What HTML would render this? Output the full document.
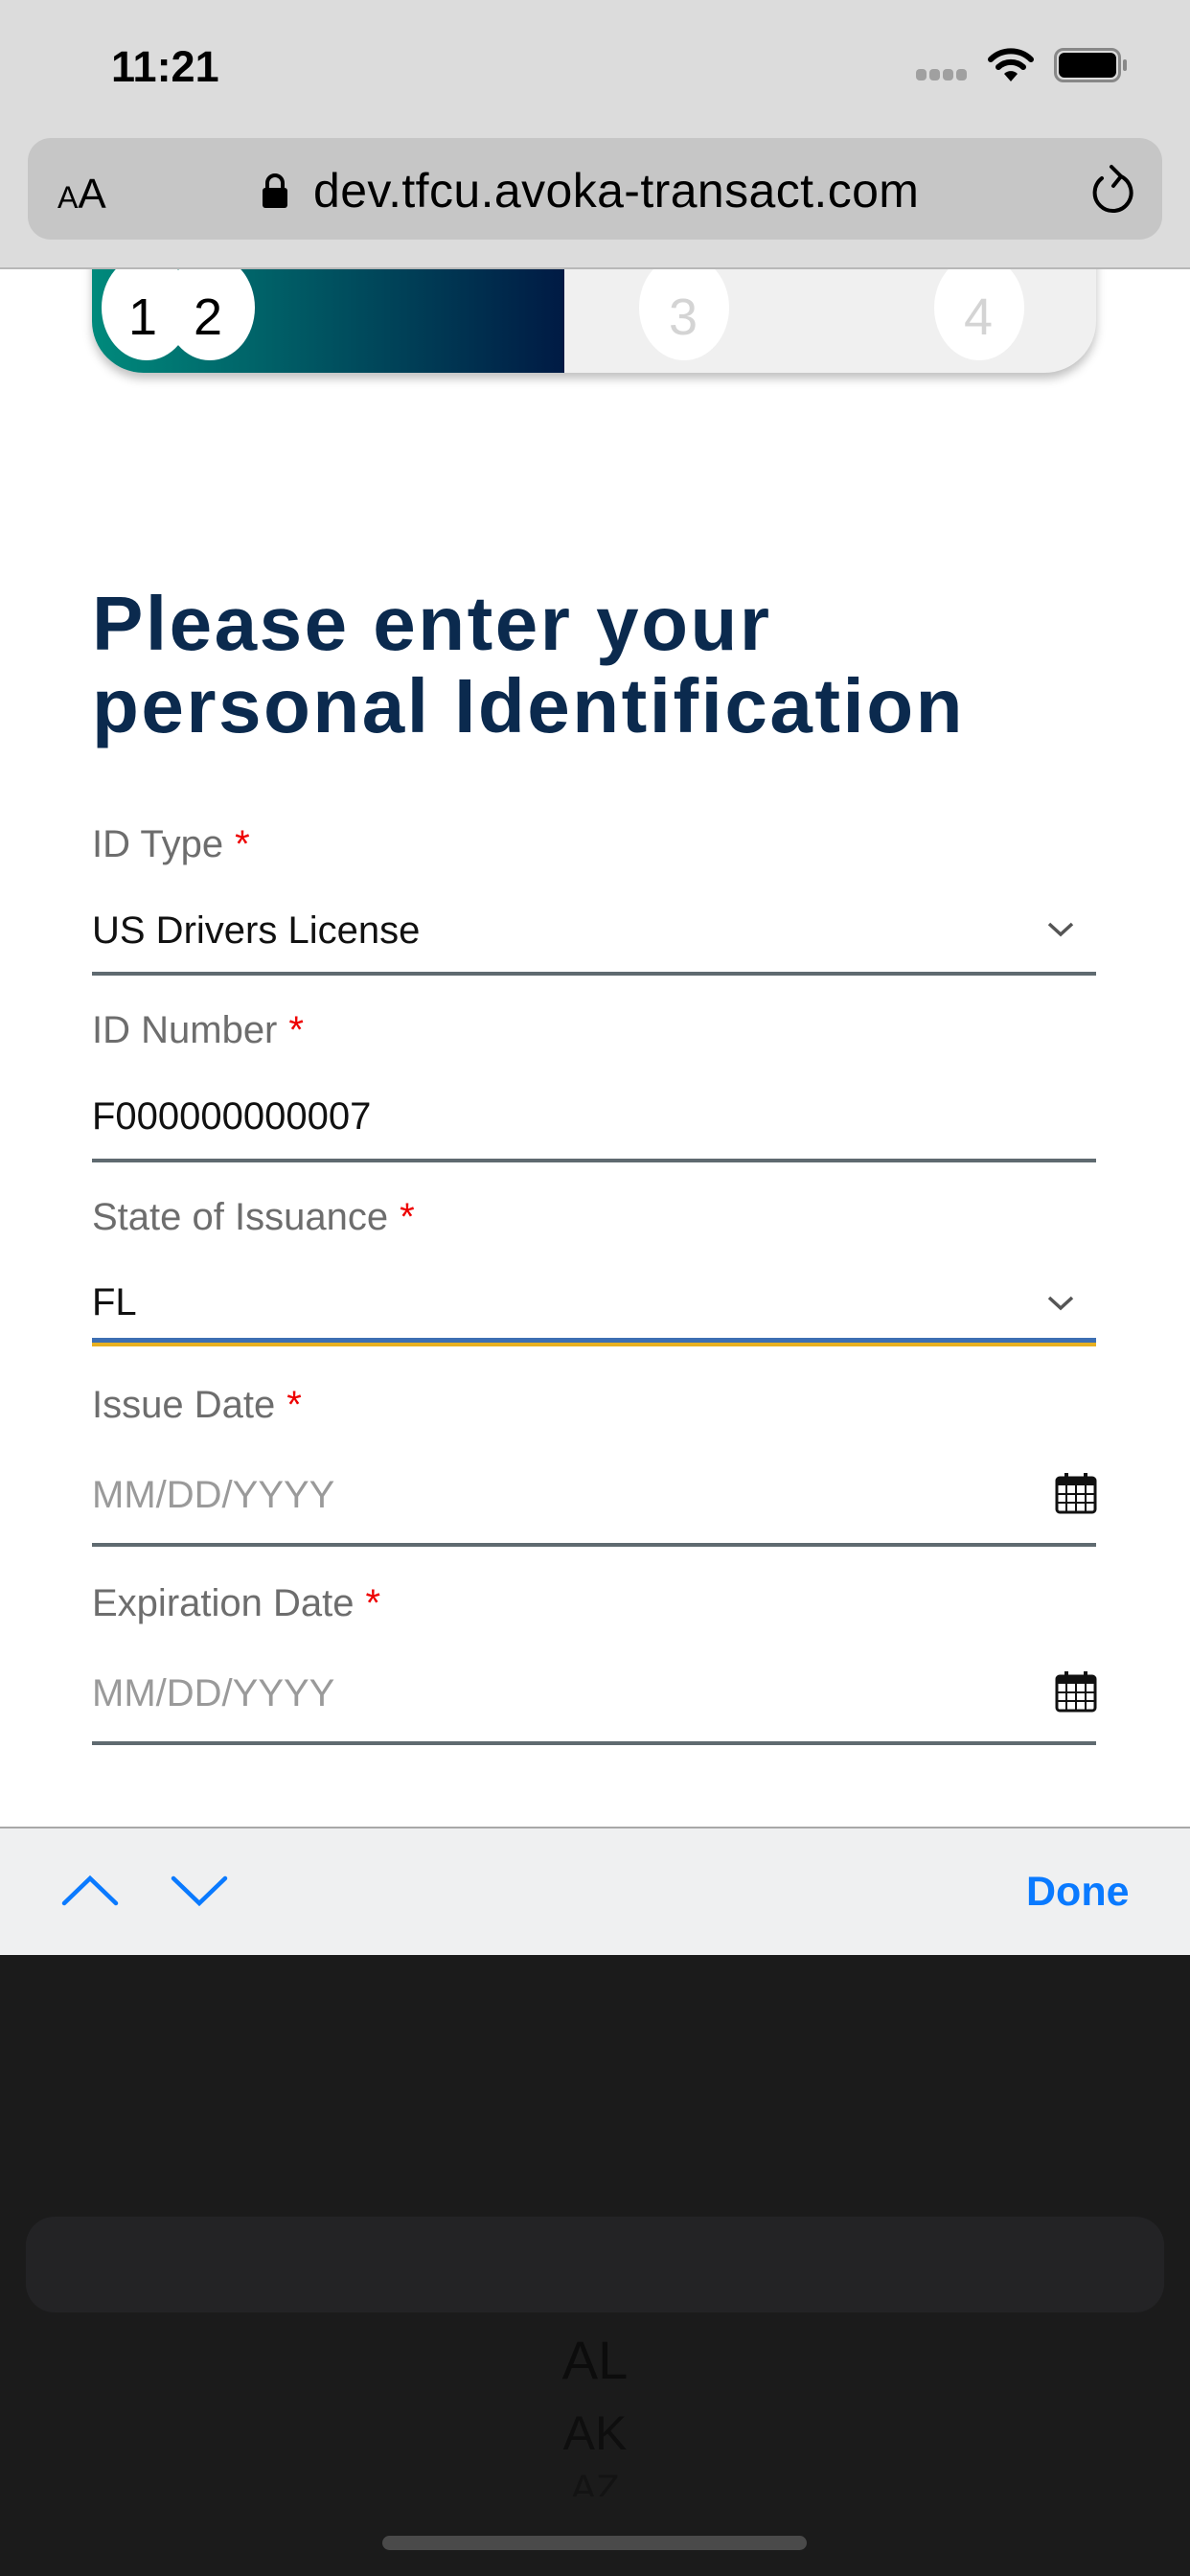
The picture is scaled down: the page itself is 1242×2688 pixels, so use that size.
<!DOCTYPE html>
<html><head><meta charset="utf-8"><style>
*{margin:0;padding:0;box-sizing:border-box}
body{width:1242px;height:2688px;position:relative;background:#fff;font-family:"Liberation Sans",sans-serif;overflow:hidden}
.abs{position:absolute}
.lbl{position:absolute;left:96px;font-size:40px;color:#6d6d6d;line-height:1}
.lbl b{color:#e00;font-weight:normal;margin-left:12px}
.val{position:absolute;left:96px;font-size:40px;color:#111;line-height:1}
.ph{color:#9a9a9a}
.line{position:absolute;left:96px;width:1048px;height:4px;background:#5f6a70}
.c{position:absolute;width:94px;height:110px;border-radius:50%;background:#fff;top:266px}
</style></head><body>
<div class="abs" style="left:96px;top:250px;width:1048px;height:139px;border-radius:0 0 54px 54px;background:#f0f0f0;box-shadow:0 6px 10px rgba(0,0,0,.25);overflow:hidden">
<div style="position:absolute;left:0;top:0;width:493px;height:139px;background:linear-gradient(90deg,#008a7c,#001a44)"></div></div>
<div class="c" style="left:106px"></div>
<div class="c" style="left:172px"></div>
<div class="c" style="left:667px"></div>
<div class="c" style="left:975px"></div>
<div class="abs" style="left:134px;top:300px;font-size:54px;color:#000">1</div>
<div class="abs" style="left:202px;top:300px;font-size:54px;color:#000">2</div>
<div class="abs" style="left:698px;top:300px;font-size:54px;color:#d4d4d4">3</div>
<div class="abs" style="left:1006px;top:300px;font-size:54px;color:#d4d4d4">4</div>
<div class="abs" style="left:0;top:0;width:1242px;height:281px;background:#dcdcdc;border-bottom:2px solid #b8b8b8"></div>
<div class="abs" style="left:116px;top:44px;font-size:45px;font-weight:bold;color:#000">11:21</div>
<div class="abs" style="left:956px;top:72px;width:55px;height:12px">
<span style="position:absolute;left:0;width:11px;height:12px;border-radius:4px;background:#a0a0a0"></span>
<span style="position:absolute;left:14px;width:11px;height:12px;border-radius:4px;background:#a0a0a0"></span>
<span style="position:absolute;left:28px;width:11px;height:12px;border-radius:4px;background:#a0a0a0"></span>
<span style="position:absolute;left:42px;width:11px;height:12px;border-radius:4px;background:#a0a0a0"></span></div>
<svg class="abs" style="left:1030px;top:48px" width="50" height="40" viewBox="0 0 50 40"><path d="M4 14 A30 30 0 0 1 46 14" stroke="#000" stroke-width="6" fill="none" stroke-linecap="round"/><path d="M12 22 A19 19 0 0 1 38 22" stroke="#000" stroke-width="6" fill="none" stroke-linecap="round"/><path d="M18 29 L25 37 L32 29 A10 10 0 0 0 18 29Z" fill="#000"/></svg>
<div class="abs" style="left:1100px;top:50px;width:70px;height:36px;border:3px solid #888;border-radius:10px"></div>
<div class="abs" style="left:1105px;top:55px;width:60px;height:26px;background:#000;border-radius:6px"></div>
<div class="abs" style="left:1172px;top:62px;width:4px;height:12px;background:#888;border-radius:2px"></div>
<div class="abs" style="left:29px;top:144px;width:1184px;height:106px;background:#c6c6c6;border-radius:24px"></div>
<div class="abs" style="left:60px;top:178px;color:#000"><span style="font-size:32px">A</span><span style="font-size:44px">A</span></div>
<svg class="abs" style="left:272px;top:180px" width="30" height="38" viewBox="0 0 30 38"><path d="M7 17V11a8 8 0 0 1 16 0v6" stroke="#000" stroke-width="4" fill="none"/><rect x="2" y="16" width="26" height="21" rx="3" fill="#000"/></svg>
<div class="abs" style="left:327px;top:170px;font-size:50px;color:#000;letter-spacing:0.4px">dev.tfcu.avoka-transact.com</div>
<svg class="abs" style="left:1136px;top:168px" width="52" height="60" viewBox="0 0 52 60"><path d="M34 16 A19 19 0 1 1 14 18" stroke="#000" stroke-width="4" fill="none" stroke-linecap="round"/><path d="M24 6 L34 16 L26 26" stroke="#000" stroke-width="4" fill="none" stroke-linecap="round" stroke-linejoin="round"/></svg>
<div class="abs" style="left:96px;top:608px;font-size:80px;font-weight:bold;color:#0b2a4e;line-height:86px;letter-spacing:2.5px">Please enter your<br>personal Identification</div>
<div class="lbl" style="top:861px">ID Type<b>*</b></div>
<div class="val" style="top:951px">US Drivers License</div>
<svg class="abs" style="left:1092px;top:960px" width="30" height="20" viewBox="0 0 30 20"><path d="M3 4 L15 15 L27 4" stroke="#555" stroke-width="3.5" fill="none"/></svg>
<div class="line" style="top:1014px"></div>
<div class="lbl" style="top:1055px">ID Number<b>*</b></div>
<div class="val" style="top:1145px">F000000000007</div>
<div class="line" style="top:1209px"></div>
<div class="lbl" style="top:1250px">State of Issuance<b>*</b></div>
<div class="val" style="top:1339px">FL</div>
<svg class="abs" style="left:1092px;top:1350px" width="30" height="20" viewBox="0 0 30 20"><path d="M3 4 L15 15 L27 4" stroke="#555" stroke-width="3.5" fill="none"/></svg>
<div class="abs" style="left:96px;top:1396px;width:1048px;height:5px;background:#3d6fb3"></div>
<div class="abs" style="left:96px;top:1401px;width:1048px;height:4px;background:#e8b020"></div>
<div class="lbl" style="top:1446px">Issue Date<b>*</b></div>
<div class="val ph" style="top:1540px">MM/DD/YYYY</div>
<div class="line" style="top:1610px"></div>
<div class="lbl" style="top:1653px">Expiration Date<b>*</b></div>
<div class="val ph" style="top:1747px">MM/DD/YYYY</div>
<div class="line" style="top:1817px"></div>
<svg class="abs" style="left:1100px;top:1535px" width="46" height="46" viewBox="0 0 46 46"><rect x="3" y="7" width="40" height="36" rx="3" stroke="#111" stroke-width="3" fill="none"/><rect x="3" y="7" width="40" height="8" fill="#111"/><rect x="11" y="2" width="4" height="9" fill="#111"/><rect x="31" y="2" width="4" height="9" fill="#111"/><path d="M3 24H43M3 33H43M13 15V43M23 15V43M33 15V43" stroke="#111" stroke-width="2"/></svg>
<svg class="abs" style="left:1100px;top:1742px" width="46" height="46" viewBox="0 0 46 46"><rect x="3" y="7" width="40" height="36" rx="3" stroke="#111" stroke-width="3" fill="none"/><rect x="3" y="7" width="40" height="8" fill="#111"/><rect x="11" y="2" width="4" height="9" fill="#111"/><rect x="31" y="2" width="4" height="9" fill="#111"/><path d="M3 24H43M3 33H43M13 15V43M23 15V43M33 15V43" stroke="#111" stroke-width="2"/></svg>
<div class="abs" style="left:0;top:1906px;width:1242px;height:134px;background:#eff0f1;border-top:2px solid #a8a8a8"></div>
<svg class="abs" style="left:62px;top:1955px" width="64" height="36" viewBox="0 0 64 36"><path d="M5 31 L32 5 L59 31" stroke="#0a7aff" stroke-width="4.5" fill="none" stroke-linecap="round"/></svg>
<svg class="abs" style="left:176px;top:1955px" width="64" height="36" viewBox="0 0 64 36"><path d="M5 5 L32 31 L59 5" stroke="#0a7aff" stroke-width="4.5" fill="none" stroke-linecap="round"/></svg>
<div class="abs" style="left:1071px;top:1950px;font-size:43px;font-weight:bold;color:#0a7aff">Done</div>
<div class="abs" style="left:0;top:2040px;width:1242px;height:648px;background:#1b1b1b"></div>
<div class="abs" style="left:27px;top:2313px;width:1188px;height:100px;background:#232325;border-radius:30px"></div>
<div class="abs" style="left:0;top:2430px;width:1242px;text-align:center;font-size:56px;color:#0c0c0c">AL</div>
<div class="abs" style="left:0;top:2510px;width:1242px;text-align:center;font-size:50px;color:#0e0e0e">AK</div>
<div class="abs" style="left:0;top:2575px;width:1242px;text-align:center;font-size:40px;color:#131313;height:30px;overflow:hidden">AZ</div>
<div class="abs" style="left:399px;top:2646px;width:443px;height:15px;background:#4a4a4a;border-radius:8px"></div>
</body></html>
